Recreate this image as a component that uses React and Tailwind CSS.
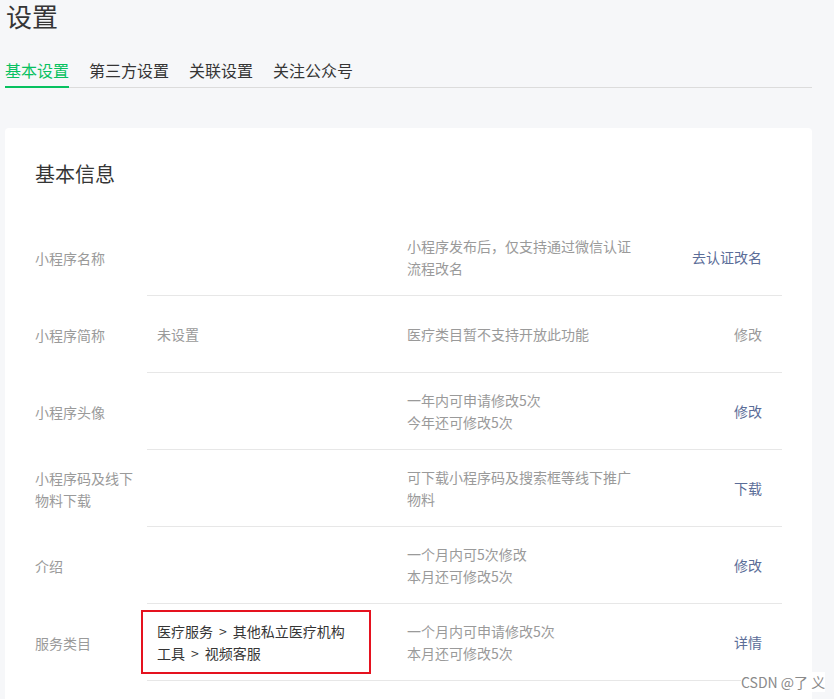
import React from 'react'

const font = { fontFamily: '"Noto Sans CJK SC", "Noto Sans", sans-serif' }

const tabs = ['基本设置', '第三方设置', '关联设置', '关注公众号']

const rows = [
  { label: '小程序名称', value: '', desc: ['小程序发布后，仅支持通过微信认证流程改名'], action: '去认证改名' },
  { label: '小程序简称', value: '未设置', desc: ['医疗类目暂不支持开放此功能'], action: '修改', disabled: true },
  { label: '小程序头像', value: '', desc: ['一年内可申请修改5次', '今年还可修改5次'], action: '修改' },
  { label: '小程序码及线下物料下载', value: '', desc: ['可下载小程序码及搜索框等线下推广物料'], action: '下载' },
  { label: '介绍', value: '', desc: ['一个月内可5次修改', '本月还可修改5次'], action: '修改' },
  {
    label: '服务类目',
    value: [
      ['医疗服务', '其他私立医疗机构'],
      ['工具', '视频客服'],
    ],
    desc: ['一个月内可申请修改5次', '本月还可修改5次'],
    action: '详情',
  },
]

const InfoRow = ({ row }) => (
  <div className="flex">
    <div className="w-[112px] shrink-0 flex items-center pr-2 text-[14px] leading-[22px] text-[#9a9a9a]">
      {row.label}
    </div>
    <div className="flex-1 flex items-center h-[77px] border-b border-[#e7e7e7]">
      <div className="relative w-[260px] shrink-0 pl-[10px] text-[14px] leading-[22px]">
        {Array.isArray(row.value) ? (
          <>
            {row.value.map(([a, b]) => (
              <div key={a} className="text-[#353535]">
                {a}
                <span className="mx-[6px]">&gt;</span>
                {b}
              </div>
            ))}
            {/* 红框标注 */}
            <div className="absolute left-[-6px] top-[-10px] w-[230px] h-[64px] border-2 border-[#e5121f]" />
          </>
        ) : (
          <span className="text-[#9a9a9a]">{row.value}</span>
        )}
      </div>
      <div className="w-[232px] shrink-0 text-[14px] leading-[22px] text-[#9a9a9a]">
        {row.desc.map((d) => (
          <div key={d}>{d}</div>
        ))}
      </div>
      <div className="flex-1 text-right pr-5 text-[14px] leading-[22px]">
        <span className={row.disabled ? 'text-[#9a9a9a]' : 'text-[#5b6d98]'}>{row.action}</span>
      </div>
    </div>
  </div>
)

export default function App() {
  return (
    <div className="relative min-h-screen bg-[#f6f7f9] pl-[5px] w-[834px] overflow-hidden" style={font}>
      <div className="w-[807px]">
        <h1 className="text-[26px] leading-[32px] text-[#353535] pl-px font-normal">设置</h1>

        <div className="mt-[26px] flex gap-5 border-b border-[#dcdcdc]">
          {tabs.map((t, i) => (
            <div
              key={t}
              className={
                i === 0
                  ? 'text-[16px] leading-[24px] pb-[4px] text-[#07c160] border-b-2 border-[#07c160] -mb-px'
                  : 'text-[16px] leading-[24px] pb-[4px] text-[#353535]'
              }
            >
              {t}
            </div>
          ))}
        </div>

        <div className="mt-[40px] bg-white rounded px-[30px] pt-[32px] pb-[40px]">
          <h2 className="text-[20px] leading-[28px] text-[#353535] font-normal">基本信息</h2>
          <div className="mt-[31px]">
            {rows.map((r) => (
              <InfoRow key={r.label} row={r} />
            ))}
          </div>
        </div>
      </div>

      <div className="absolute left-[741px] top-[672px] bg-white text-[14px] leading-[20px] text-[#8a8a8a]">
        CSDN @了 义
      </div>
    </div>
  )
}
